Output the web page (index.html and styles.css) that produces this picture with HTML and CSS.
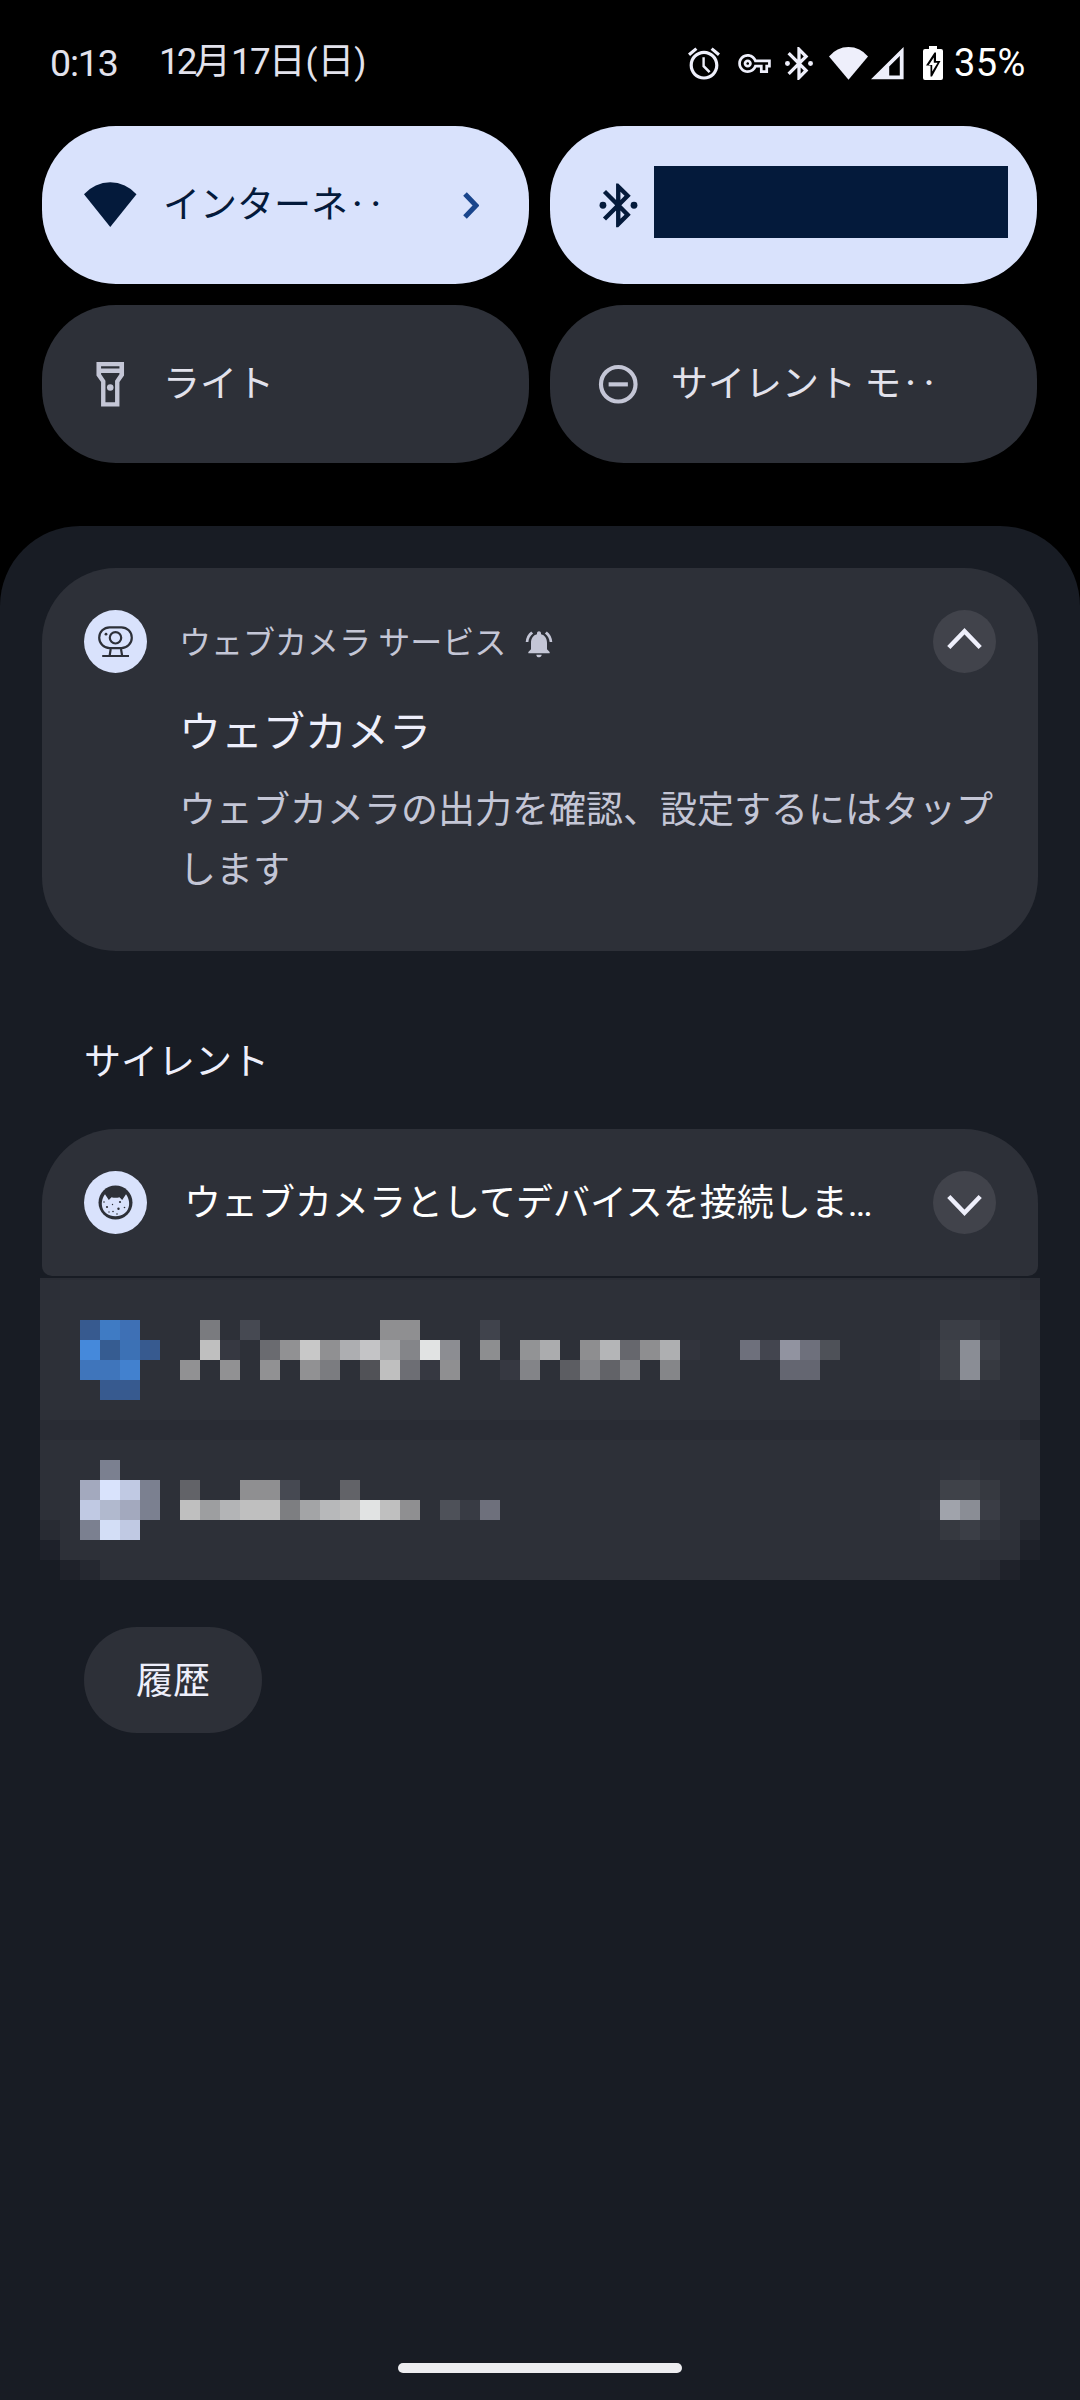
FILE: index.html
```html
<!DOCTYPE html>
<html lang="ja">
<head>
<meta charset="utf-8">
<title>通知シェード</title>
<link rel="stylesheet" href="styles.css">
</head>
<body>
<div class="screen">
  <header class="status">
    <span class="clock">0:13</span>
    <span class="date"><span class="num month">12</span>月<span class="num">17</span>日<span class="paren">(</span>日<span class="paren">)</span></span>
    <div class="status-icons">
      <svg class="i-alarm" viewBox="2 1.86 20 20.14"><path d="M22 5.72l-4.6-3.86-1.29 1.53 4.6 3.86L22 5.72zM7.88 3.39L6.6 1.86 2 5.71l1.29 1.53 4.59-3.85zM12.5 8H11v6l3.9 3.9 1.2-1.2-3.6-3.5V8zM12 4c-4.97 0-9 4.03-9 9s4.02 9 9 9c4.97 0 9-4.03 9-9s-4.03-9-9-9zm0 16c-3.87 0-7-3.13-7-7s3.13-7 7-7 7 3.13 7 7-3.13 7-7 7z"/></svg>
      <svg class="i-key" viewBox="0 5 24 14"><path d="M22 19h-6v-4h-2.68c-1.14 2.42-3.6 4-6.32 4-3.86 0-7-3.14-7-7s3.14-7 7-7c2.72 0 5.17 1.58 6.32 4H24v6h-2v4zm-4-2h2v-4h2v-2H11.94l-.23-.67C11.01 8.34 9.11 7 7 7c-2.76 0-5 2.24-5 5s2.24 5 5 5c2.11 0 4.01-1.34 4.71-3.33l.23-.67H18v4zM7 15c-1.65 0-3-1.35-3-3s1.35-3 3-3 3 1.35 3 3-1.35 3-3 3zm0-4c-.55 0-1 .45-1 1s.45 1 1 1 1-.45 1-1-.45-1-1-1z"/></svg>
      <svg class="i-bt" viewBox="3.5 2 17 20"><path d="M17.71 7.71L12 2h-1v7.59L6.41 5 5 6.41 10.59 12 5 17.59 6.41 19 11 14.41V22h1l5.71-5.71-4.3-4.29 4.3-4.29zM13 5.83l1.88 1.88L13 9.59V5.83zm1.88 10.46L13 18.17v-3.76l1.88 1.88z"/><circle cx="5" cy="12" r="1.5"/><circle cx="19" cy="12" r="1.5"/></svg>
      <svg class="i-wifi" viewBox="0 0 39 33"><path d="M0 9.5A24.8 24.8 0 0 1 39 9.5L19.5 32.7Z"/></svg>
      <svg class="i-cell" viewBox="0 0 33 33"><path fill-rule="evenodd" d="M0 32.3L32.6 0V32.3ZM18.2 19.5V28.5H28.8V9Z"/></svg>
      <svg class="i-batt" viewBox="0 0 20 34"><path fill-rule="evenodd" d="M6 0H14V3H18Q20 3 20 5V32Q20 34 18 34H2Q0 34 0 32V5Q0 3 2 3H6ZM11.500 6.500L3 19.500H7.500V30.500H9L17.500 15H13V6.500Z"/><path d="M10.800 11.500L5.800 19H9.200V25.500L14.600 16.800H10.800Z"/></svg>
      <span class="level">35%</span>
    </div>
  </header>

  <section class="tiles">
    <div class="tile on">
      <svg class="tile-icon" viewBox="0 0 24 24"><path d="M0 7A15.900 15.900 0 0 1 24 7L12 21.900Z"/></svg>
      <span class="tile-label">インターネ‥</span>
      <svg class="go" viewBox="0 0 16 27"><path d="M2 2L13 13.500L2 25"/></svg>
    </div>
    <div class="tile on">
      <svg class="tile-icon" viewBox="0 0 24 24"><path d="M17.710 7.710L12 2h-1v7.590L6.410 5 5 6.410 10.590 12 5 17.590 6.410 19 11 14.410V22h1l5.710-5.710-4.300-4.290 4.300-4.290zM13 5.830l1.880 1.880L13 9.590V5.830zm1.880 10.460L13 18.170v-3.760l1.880 1.880z"/><circle cx="5" cy="12" r="1.550"/><circle cx="19.200" cy="12" r="1.550"/></svg>
      <span class="redacted"></span>
    </div>
    <div class="tile">
      <svg class="tile-icon" viewBox="0 0 24 24"><path fill-rule="evenodd" d="M5.700 1.800V8l2.100 3v11.200h8.400V11l2.100-3V1.800ZM16.200 3.800V4.800H7.800V3.800ZM14.200 10.400V20.200H9.800V10.400L7.800 7.400V6.800H16.200V7.400Z"/><circle cx="12" cy="13.500" r="1.500"/></svg>
      <span class="tile-label">ライト</span>
    </div>
    <div class="tile">
      <svg class="tile-icon" viewBox="0 0 24 24"><circle class="ring" cx="12" cy="12" r="7.900"/><path d="M7.600 11.100h8.800v1.900H7.600z"/></svg>
      <span class="tile-label">サイレント モ‥</span>
    </div>
  </section>

  <main class="shade">
    <article class="card main-card">
      <svg class="badge" viewBox="0 0 63 63"><circle class="disc" cx="31.500" cy="31.500" r="31.500"/><g class="line"><rect x="15.200" y="17.300" width="32.600" height="20.800" rx="10.400"/><circle cx="31.500" cy="27.800" r="5.700"/><path d="M26.700 39L25.600 46M37 39L38.200 46M18.200 46H45"/></g><circle cx="22" cy="24.200" r="1.400" fill="#2d3038"/></svg>
      <div class="content">
        <div class="app-row"><span>ウェブカメラ サービス</span><svg class="bell" viewBox="0 0 24 24"><path d="M7.580 4.080L6.150 2.650C3.750 4.480 2.170 7.300 2.030 10.500h2c.15-2.650 1.510-4.970 3.550-6.420zm12.390 6.420h2c-.15-3.200-1.730-6.020-4.120-7.850l-1.420 1.430c2.020 1.450 3.390 3.770 3.540 6.420zM18 11c0-3.070-1.640-5.640-4.500-6.320V4c0-.83-.67-1.500-1.500-1.500s-1.500.67-1.500 1.500v.68C7.630 5.360 6 7.920 6 11v5l-2 2v1h16v-1l-2-2v-5zm-6 11c.14 0 .27-.01.400-.04.65-.14 1.180-.58 1.440-1.180.1-.24.15-.5.15-.78h-4c.01 1.100.9 2 2.010 2z"/></svg></div>
        <h2>ウェブカメラ</h2>
        <p>ウェブカメラの出力を確認、設定するにはタップします</p>
      </div>
      <svg class="expand" viewBox="0 0 63 63"><circle cx="31.500" cy="31.500" r="31.500"/><path d="M15.800 37.500L31.500 21.300L47.200 37.500"/></svg>
    </article>

    <h3 class="section">サイレント</h3>

    <article class="card usb-card">
      <svg class="badge" viewBox="0 0 63 63"><circle class="disc" cx="31.500" cy="31.500" r="31.500"/><circle cx="31.500" cy="31.500" r="17" fill="#2d3038"/><path class="disc" d="M21 23.300L24.800 29L27.500 26.200Q31.500 27.400 35.500 26.200L38.200 29L42 23.300C48 31 46 45.200 31.500 45.200S15 31 21 23.300Z"/><g fill="#2d3038"><circle cx="23" cy="36" r="1.100"/><circle cx="34.500" cy="37.800" r="1.200"/><circle cx="29" cy="40.500" r=".8"/><circle cx="36" cy="31" r="1.100"/><circle cx="28.500" cy="33.500" r=".7"/><circle cx="40.500" cy="36.500" r=".8"/><circle cx="20" cy="31" r=".8"/><circle cx="33" cy="43" r=".8"/><circle cx="25" cy="41" r=".7"/></g></svg>
      <span class="usb-title">ウェブカメラとしてデバイスを接続しま<span class="dots">…</span></span>
      <svg class="expand" viewBox="0 0 63 63"><circle cx="31.500" cy="31.500" r="31.500"/><path d="M15.800 25.500L31.500 41.700L47.200 25.500"/></svg>
    </article>

    <svg class="mosaic" viewBox="0 -0.1 50 15.1" shape-rendering="crispEdges">
      <path fill="#2a2d35" d="M0 -.1h50v.1h-50z"/>
      <path fill="#2d3038" d="M0 0h50v14h-1v1h-48v-1h-1z"/>
      <path fill="#292c34" d="M0 7h50v1h-50z"/>
      <g class="px">
        <rect x="0" y="0" fill="#2c2f37"/><rect x="49" y="0" fill="#2b2d35"/><rect x="49" y="7" fill="#24272f"/>
        <rect x="0" y="12" fill="#282b33"/><rect x="0" y="13" fill="#1e212a"/><rect x="1" y="14" fill="#1f222a"/><rect x="2" y="14" fill="#252830"/>
        <rect x="49" y="12" fill="#24272f"/><rect x="49" y="13" fill="#1e2129"/><rect x="48" y="14" fill="#1f222a"/><rect x="47" y="14" fill="#292c34"/>

        <rect x="2" y="2" fill="#375a8f"/><rect x="3" y="2" fill="#3f7bc4"/><rect x="4" y="2" fill="#3e70b5"/>
        <rect x="2" y="3" fill="#4589db"/><rect x="3" y="3" fill="#365c91"/><rect x="4" y="3" fill="#3c71b5"/><rect x="5" y="3" fill="#375a8f"/>
        <rect x="2" y="4" fill="#3f75bb"/><rect x="3" y="4" fill="#3f75bb"/><rect x="4" y="4" fill="#4281cf"/>
        <rect x="3" y="5" fill="#375a8f"/><rect x="4" y="5" fill="#375a8f"/>

        <rect x="8" y="2" fill="#7a7b7f"/><rect x="10" y="2" fill="#464952"/><rect x="17" y="2" fill="#8f8f91"/><rect x="18" y="2" fill="#8f8f91"/><rect x="22" y="2" fill="#40434c"/>
        <rect x="8" y="3" fill="#bfbfbf"/><rect x="9" y="3" fill="#363841"/><rect x="11" y="3" fill="#6a6b70"/><rect x="12" y="3" fill="#919193"/><rect x="13" y="3" fill="#c8c8c8"/><rect x="14" y="3" fill="#909092"/><rect x="15" y="3" fill="#adaeb1"/><rect x="16" y="3" fill="#c4c4c6"/><rect x="17" y="3" fill="#a8a9ab"/><rect x="18" y="3" fill="#848589"/><rect x="19" y="3" fill="#e1e3e3"/><rect x="20" y="3" fill="#8c8d92"/><rect x="22" y="3" fill="#8d8e90"/><rect x="24" y="3" fill="#929395"/><rect x="25" y="3" fill="#abacae"/><rect x="27" y="3" fill="#8e8e90"/><rect x="28" y="3" fill="#b4b5b7"/><rect x="29" y="3" fill="#66676d"/><rect x="30" y="3" fill="#8e8e90"/><rect x="31" y="3" fill="#aeafb1"/><rect x="32" y="3" fill="#32343d"/>
        <rect x="7" y="4" fill="#919193"/><rect x="9" y="4" fill="#919193"/><rect x="11" y="4" fill="#919193"/><rect x="13" y="4" fill="#919193"/><rect x="14" y="4" fill="#7b7c80"/><rect x="16" y="4" fill="#515257"/><rect x="17" y="4" fill="#bfbfbf"/><rect x="18" y="4" fill="#6d6e74"/><rect x="19" y="4" fill="#363841"/><rect x="20" y="4" fill="#8f8f91"/><rect x="23" y="4" fill="#363841"/><rect x="24" y="4" fill="#838488"/><rect x="26" y="4" fill="#5c5d62"/><rect x="27" y="4" fill="#838488"/><rect x="28" y="4" fill="#626368"/><rect x="29" y="4" fill="#828387"/><rect x="31" y="4" fill="#858689"/>
        <rect x="35" y="3" fill="#6e707c"/><rect x="36" y="3" fill="#43454f"/><rect x="37" y="3" fill="#9193a0"/><rect x="38" y="3" fill="#6e707c"/><rect x="39" y="3" fill="#4e5158"/><rect x="37" y="4" fill="#646671"/><rect x="38" y="4" fill="#646671"/>
        <rect x="45" y="2" fill="#3b3e46"/><rect x="46" y="2" fill="#3b3e46"/><rect x="47" y="2" fill="#32353d"/><rect x="44" y="3" fill="#30333b"/><rect x="45" y="3" fill="#3f4249"/><rect x="46" y="3" fill="#8a8d95"/><rect x="47" y="3" fill="#3b3e46"/><rect x="44" y="4" fill="#30333b"/><rect x="45" y="4" fill="#3f4249"/><rect x="46" y="4" fill="#8a8d95"/><rect x="47" y="4" fill="#363940"/><rect x="46" y="5" fill="#30333b"/>

        <rect x="3" y="9" fill="#7b8090"/><rect x="2" y="10" fill="#a3a9be"/><rect x="3" y="10" fill="#d9e3fc"/><rect x="4" y="10" fill="#c0c9e3"/><rect x="5" y="10" fill="#7b8090"/>
        <rect x="2" y="11" fill="#c0c9e3"/><rect x="3" y="11" fill="#b1b9ce"/><rect x="4" y="11" fill="#a3a9be"/><rect x="5" y="11" fill="#7b8090"/>
        <rect x="2" y="12" fill="#7b8090"/><rect x="3" y="12" fill="#d3def6"/><rect x="4" y="12" fill="#c0c9e3"/>
        <rect x="7" y="10" fill="#626368"/><rect x="10" y="10" fill="#8f8f91"/><rect x="11" y="10" fill="#8f8f91"/><rect x="12" y="10" fill="#464952"/><rect x="15" y="10" fill="#626368"/>
        <rect x="7" y="11" fill="#bfbfbf"/><rect x="8" y="11" fill="#9d9ea0"/><rect x="9" y="11" fill="#b3b4b6"/><rect x="10" y="11" fill="#bfbfbf"/><rect x="11" y="11" fill="#bfbfbf"/><rect x="12" y="11" fill="#7d7e81"/><rect x="13" y="11" fill="#a3a4a6"/><rect x="14" y="11" fill="#b7b8ba"/><rect x="15" y="11" fill="#bfbfbf"/><rect x="16" y="11" fill="#e1e3e3"/><rect x="17" y="11" fill="#bfbfbf"/><rect x="18" y="11" fill="#8f8f91"/><rect x="20" y="11" fill="#4e5159"/><rect x="21" y="11" fill="#383b44"/><rect x="22" y="11" fill="#6e707c"/>
        <rect x="45" y="9" fill="#2f323a"/><rect x="46" y="9" fill="#31343c"/><rect x="45" y="10" fill="#3f4249"/><rect x="46" y="10" fill="#3f4249"/><rect x="47" y="10" fill="#363940"/><rect x="44" y="11" fill="#30333b"/><rect x="45" y="11" fill="#a0a3ab"/><rect x="46" y="11" fill="#8a8d95"/><rect x="47" y="11" fill="#3a3d45"/><rect x="45" y="12" fill="#363940"/><rect x="46" y="12" fill="#3b3e46"/><rect x="47" y="12" fill="#32353d"/>
      </g>
    </svg>

    <button class="history">履歴</button>
    <div class="home"></div>
  </main>
</div>
</body>
</html>
```
FILE: styles.css
```css
* { box-sizing: border-box; margin: 0; padding: 0; }
body {
  background: #000;
  font-family: "Noto Sans CJK JP", sans-serif;
  font-size: 37px;
  font-weight: 400;
}
svg { display: block; flex: none; }
.screen { width: 1080px; height: 2400px; display: flex; flex-direction: column; overflow: hidden; }

/* status bar */
.status { height: 126px; padding: 0 54px 0 50px; display: flex; align-items: center; color: #e2e2ec; flex: none; }
.clock, .num, .paren, .level { font-family: "Roboto", sans-serif; }
.clock { width: 109px; font-size: 37.5px; letter-spacing: -1.2px; padding-bottom: 1px; }
.date { font-size: 36.75px; white-space: nowrap; line-height: 60px; padding-bottom: 5px; }
.num { letter-spacing: -1.8px; }
.month { letter-spacing: -3px; }
.paren { font-size: 35px; }
.status-icons { margin-left: auto; display: flex; align-items: center; fill: #eeeffb; }
.i-alarm { width: 32px; height: 33px; margin-right: 18px; }
.i-key { width: 33px; height: 19px; margin-right: 14px; }
.i-bt { width: 28px; height: 33px; margin-right: 16px; }
.i-wifi { width: 39px; height: 33px; margin-right: 3px; }
.i-cell { width: 33px; height: 33px; margin-right: 19px; }
.i-batt { width: 20px; height: 34px; margin-right: 11px; fill: #fff; }
.level { width: 72px; font-size: 38px; color: #fff; letter-spacing: .4px; white-space: nowrap; }

/* quick settings */
.tiles { display: grid; grid-template-columns: 487px 487px; gap: 21px; padding: 0 42px; flex: none; }
.tile { height: 158px; border-radius: 74px; background: #2d3038; color: #e2e2ec; fill: #c4c6d6; padding-left: 42px; display: flex; align-items: center; }
.tile.on { background: #d9e2fc; color: #041a3b; fill: #041a3b; }
.tile-icon { width: 52.5px; height: 52.5px; margin-right: 26.5px; }
.tile-label { line-height: 60px; padding-bottom: 6px; white-space: nowrap; }
.ring { fill: none; stroke: #c4c6d6; stroke-width: 1.9; }
.go { width: 16px; height: 27px; margin-left: auto; margin-right: 50px; fill: none; stroke: #19458c; stroke-width: 5; }
.redacted { width: 354px; height: 72px; margin: 0 0 6px -17px; background: #041a3b; flex: none; }

/* notification shade */
.shade { margin-top: 63px; flex: 1; background: #181c24; border-radius: 80px 80px 0 0; padding: 42px 42px 0; display: flex; flex-direction: column; }
.card { background: #2d3038; display: flex; width: 996px; padding: 42px; }
.main-card { height: 383px; border-radius: 74px; flex: none; }
.badge { width: 63px; height: 63px; }
.disc { fill: #d9e2fc; }
.line { fill: none; stroke: #2d3038; stroke-width: 2.2; }
.content { width: 753px; padding-left: 32px; flex: none; color: #c4c6d6; }
.app-row { height: 63px; display: flex; align-items: center; gap: 17px; font-size: 32px; line-height: 60px; }
.app-row span { padding-bottom: 4px; }
.bell { width: 32px; height: 32px; fill: #c4c6d6; margin-top: 5px; }
h2 { font-size: 42px; font-weight: 400; line-height: 60px; color: #eeeffb; margin-top: 26px; }
p { width: 820px; line-height: 60px; margin-top: 18px; }
.expand { width: 63px; height: 63px; margin-left: auto; }
.expand circle { fill: #41434b; }
.expand path { fill: none; stroke: #eeeffb; stroke-width: 4.5; }
.section { font-size: 37px; font-weight: 400; line-height: 60px; color: #eeeffb; margin: 78px 42px 40px; }
.usb-card { height: 147px; border-radius: 74px 74px 10px 10px; color: #fff; flex: none; }
.usb-title { margin: -1px 0 0 37px; line-height: 60px; white-space: nowrap; }
.dots { font-family: "Roboto", sans-serif; letter-spacing: 1px; }
.mosaic { width: 1000px; height: 302px; margin: 2px 0 0 -2px; }
.px rect { width: 1px; height: 1px; }
.history { margin: 47px 0 0 42px; width: 178px; height: 106px; padding-bottom: 4px; border: 0; border-radius: 53px; background: #2d3038; color: #eeeffb; font: 400 37px/60px "Noto Sans CJK JP", sans-serif; flex: none; }
.home { width: 284px; height: 10px; border-radius: 5px; background: #ededf0; margin: auto auto 27px; }
```
